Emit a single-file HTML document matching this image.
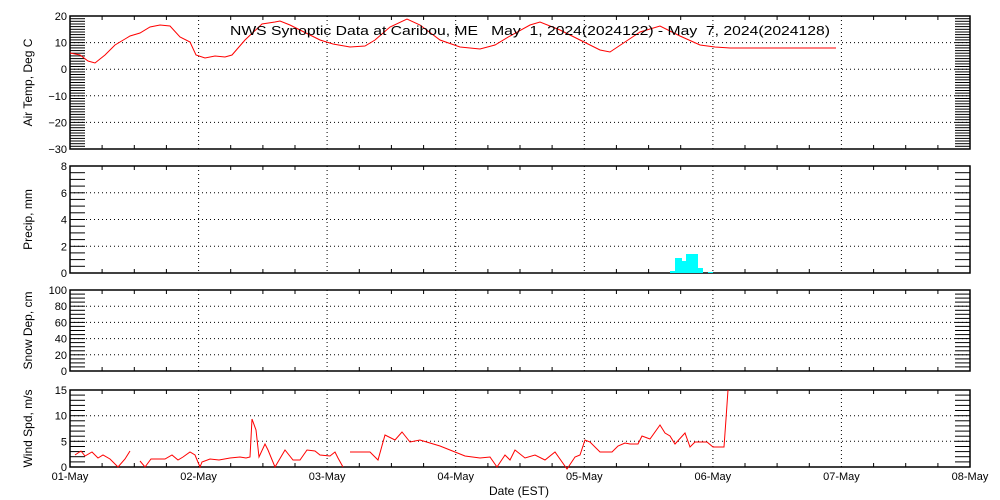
<!DOCTYPE html>
<html><head><meta charset="utf-8"><style>
html,body{margin:0;padding:0;background:#fff;width:1000px;height:500px;overflow:hidden}
svg text{font-family:"Liberation Sans",sans-serif;font-size:11px;fill:#000;white-space:pre}
</style></head><body>
<svg id="s" width="1000" height="500" viewBox="0 0 1000 500" xmlns="http://www.w3.org/2000/svg">
<g id="g"></g>
<polyline fill="none" stroke="#f00" stroke-width="1" points="70,53 80,55 88,61 95,63 105,55 115,45 125,39 130,36 140,33 150,27 160,25 170,26 180,37 190,42 196,55 205,58 215,56 225,57 232,55 245,40 262,24 275,22 280,21 290,25 300,30 320,40 333,44 350,47 365,46 375,40 390,27 407,19 420,25 440,40 460,47 480,49 495,45 510,36 530,25 540,22 560,30 580,40 600,50 610,52 625,42 640,32 660,26 680,36 700,45 715,47 730,48 836,48"/>
<g fill="#0ff">
<rect x="670" y="271" width="5" height="2"/><rect x="675" y="258" width="7" height="15"/><rect x="682" y="261" width="4" height="12"/><rect x="686" y="254" width="12" height="19"/><rect x="698" y="268" width="5" height="5"/><rect x="708" y="272" width="5" height="1"/>
</g>
<polyline fill="none" stroke="#f00" points="75,455 81,451 85,456 92,452 98,458 103,455 110,459 118,467 125,459 130,451"/>
<polyline fill="none" stroke="#f00" points="140,461 145,467 151,459 165,459 172,455 178,460 183,457 190,452 195,455 200,467 202,462 210,459 219,460 230,458 240,457 246,458 250,457 252,419 256,430 259,457 265,444 268,450 275,467 285,450 293,460 300,460 307,450 315,451 320,455 330,456 335,452 338,458 343,467"/>
<polyline fill="none" stroke="#f00" points="350,452 370,452 378,460 385,435 395,440 402,432 410,442 420,440 430,443 440,446 455,452 465,456 480,458 490,457 497,467 505,455 510,460 515,450 525,458 535,455 545,460 555,452 567,469 575,457 580,455 585,440 590,442 600,452 612,452 618,446 625,443 630,444 638,444 642,436 650,439 660,425 665,433 670,436 675,444 685,433 690,447 695,442 707,442 713,447 724,447 726,419 728,390"/>
<text x="230" y="35" style="font-size:13px" textLength="600" lengthAdjust="spacingAndGlyphs" xml:space="preserve">NWS Synoptic Data at Caribou, ME   May  1, 2024(2024122) - May  7, 2024(2024128)</text>
<g id="t"></g>
</svg>
<script>
var g=document.getElementById('g'),t=document.getElementById('t'),h='',tx='';
var X0=70,X1=970,dx=(X1-X0)/7;
var panels=[
 {y0:16,y1:149,vmin:-30,vmax:20,major:10,minor:1,lab:'Air Temp, Deg C'},
 {y0:166,y1:273,vmin:0,vmax:8,major:2,minor:0.5,lab:'Precip, mm'},
 {y0:290,y1:371,vmin:0,vmax:100,major:20,minor:5,lab:'Snow Dep, cm'},
 {y0:390,y1:467,vmin:0,vmax:15,major:5,minor:1,lab:'Wind Spd, m/s'}];
panels.forEach(function(p){
 var Y=function(v){return p.y1-(v-p.vmin)/(p.vmax-p.vmin)*(p.y1-p.y0);};
 for(var v=p.vmin;v<=p.vmax+1e-6;v+=p.minor){var y=Y(v).toFixed(1);
  h+='<line x1="'+X0+'" x2="'+(X0+15)+'" y1="'+y+'" y2="'+y+'" stroke="#000"/>';
  h+='<line x1="'+(X1-15)+'" x2="'+X1+'" y1="'+y+'" y2="'+y+'" stroke="#000"/>';}
 for(var v=p.vmin;v<=p.vmax+1e-6;v+=p.major){var y=Y(v).toFixed(1);
  if(v>p.vmin&&v<p.vmax)h+='<line x1="'+X0+'" x2="'+X1+'" y1="'+y+'" y2="'+y+'" stroke="#000" stroke-dasharray="1,3"/>';
  tx+='<text x="'+(X0-3)+'" y="'+(+y+4)+'" text-anchor="end">'+(v<0?'\u2212'+(-v):v)+'</text>';}
 for(var i=1;i<7;i++){var x=(X0+i*dx).toFixed(1);
  h+='<line x1="'+x+'" x2="'+x+'" y1="'+p.y0+'" y2="'+p.y1+'" stroke="#000" stroke-dasharray="1,3"/>';}
 for(var i=1;i<28;i++){if(i%4==0)continue;var x=(X0+i*dx/4).toFixed(1);
  h+='<line x1="'+x+'" x2="'+x+'" y1="'+p.y0+'" y2="'+(p.y0+4)+'" stroke="#000"/>';
  h+='<line x1="'+x+'" x2="'+x+'" y1="'+(p.y1-4)+'" y2="'+p.y1+'" stroke="#000"/>';}
 h+='<rect x="'+X0+'" y="'+p.y0+'" width="'+(X1-X0)+'" height="'+(p.y1-p.y0)+'" fill="none" stroke="#000" stroke-width="1.5"/>';
 var cy=(p.y0+p.y1)/2;
 tx+='<text transform="translate(32,'+cy+') rotate(-90)" text-anchor="middle" style="font-size:12px">'+p.lab+'</text>';
});
var d=['01-May','02-May','03-May','04-May','05-May','06-May','07-May','08-May'];
for(var i=0;i<8;i++)tx+='<text x="'+(X0+i*dx)+'" y="480" text-anchor="middle">'+d[i]+'</text>';
tx+='<text x="519" y="495" text-anchor="middle" style="font-size:12px">Date (EST)</text>';
g.innerHTML=h;t.innerHTML=tx;
</script>
</body></html>
